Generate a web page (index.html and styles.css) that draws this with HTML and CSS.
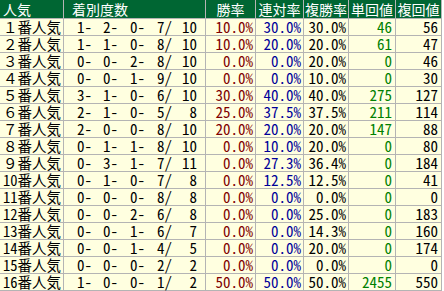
FILE: index.html
```html
<!DOCTYPE html>
<html lang="ja">
<head>
<meta charset="utf-8">
<title>人気別成績</title>
<link rel="stylesheet" href="styles.css">
</head>
<body>
<div class="tbl">
  <div class="h h-name">人気</div><div class="h h-rec">着別度数</div><div class="h">勝率</div><div class="h">連対率</div><div class="h">複勝率</div><div class="h">単回値</div><div class="h">複回値</div>

  <div class="c name">１番人気</div><div class="c rec"><span>1-</span><span>2-</span><span>0-</span><span>7/</span><span>10</span></div><div class="c num win">10.0%</div><div class="c num ren">30.0%</div><div class="c num fuku">30.0%</div><div class="c num tan">46</div><div class="c num fk">56</div>
  <div class="c name">２番人気</div><div class="c rec"><span>1-</span><span>1-</span><span>0-</span><span>8/</span><span>10</span></div><div class="c num win">10.0%</div><div class="c num ren">20.0%</div><div class="c num fuku">20.0%</div><div class="c num tan">61</div><div class="c num fk">47</div>
  <div class="c name">３番人気</div><div class="c rec"><span>0-</span><span>0-</span><span>2-</span><span>8/</span><span>10</span></div><div class="c num win">0.0%</div><div class="c num ren">0.0%</div><div class="c num fuku">20.0%</div><div class="c num tan">0</div><div class="c num fk">46</div>
  <div class="c name">４番人気</div><div class="c rec"><span>0-</span><span>0-</span><span>1-</span><span>9/</span><span>10</span></div><div class="c num win">0.0%</div><div class="c num ren">0.0%</div><div class="c num fuku">10.0%</div><div class="c num tan">0</div><div class="c num fk">30</div>
  <div class="c name">５番人気</div><div class="c rec"><span>3-</span><span>1-</span><span>0-</span><span>6/</span><span>10</span></div><div class="c num win">30.0%</div><div class="c num ren">40.0%</div><div class="c num fuku">40.0%</div><div class="c num tan">275</div><div class="c num fk">127</div>
  <div class="c name">６番人気</div><div class="c rec"><span>2-</span><span>1-</span><span>0-</span><span>5/</span><span>8</span></div><div class="c num win">25.0%</div><div class="c num ren">37.5%</div><div class="c num fuku">37.5%</div><div class="c num tan">211</div><div class="c num fk">114</div>
  <div class="c name">７番人気</div><div class="c rec"><span>2-</span><span>0-</span><span>0-</span><span>8/</span><span>10</span></div><div class="c num win">20.0%</div><div class="c num ren">20.0%</div><div class="c num fuku">20.0%</div><div class="c num tan">147</div><div class="c num fk">88</div>
  <div class="c name">８番人気</div><div class="c rec"><span>0-</span><span>1-</span><span>1-</span><span>8/</span><span>10</span></div><div class="c num win">0.0%</div><div class="c num ren">10.0%</div><div class="c num fuku">20.0%</div><div class="c num tan">0</div><div class="c num fk">80</div>
  <div class="c name">９番人気</div><div class="c rec"><span>0-</span><span>3-</span><span>1-</span><span>7/</span><span>11</span></div><div class="c num win">0.0%</div><div class="c num ren">27.3%</div><div class="c num fuku">36.4%</div><div class="c num tan">0</div><div class="c num fk">184</div>
  <div class="c name">10番人気</div><div class="c rec"><span>0-</span><span>1-</span><span>0-</span><span>7/</span><span>8</span></div><div class="c num win">0.0%</div><div class="c num ren">12.5%</div><div class="c num fuku">12.5%</div><div class="c num tan">0</div><div class="c num fk">41</div>
  <div class="c name">11番人気</div><div class="c rec"><span>0-</span><span>0-</span><span>0-</span><span>8/</span><span>8</span></div><div class="c num win">0.0%</div><div class="c num ren">0.0%</div><div class="c num fuku">0.0%</div><div class="c num tan">0</div><div class="c num fk">0</div>
  <div class="c name">12番人気</div><div class="c rec"><span>0-</span><span>0-</span><span>2-</span><span>6/</span><span>8</span></div><div class="c num win">0.0%</div><div class="c num ren">0.0%</div><div class="c num fuku">25.0%</div><div class="c num tan">0</div><div class="c num fk">183</div>
  <div class="c name">13番人気</div><div class="c rec"><span>0-</span><span>0-</span><span>1-</span><span>6/</span><span>7</span></div><div class="c num win">0.0%</div><div class="c num ren">0.0%</div><div class="c num fuku">14.3%</div><div class="c num tan">0</div><div class="c num fk">160</div>
  <div class="c name">14番人気</div><div class="c rec"><span>0-</span><span>0-</span><span>1-</span><span>4/</span><span>5</span></div><div class="c num win">0.0%</div><div class="c num ren">0.0%</div><div class="c num fuku">20.0%</div><div class="c num tan">0</div><div class="c num fk">174</div>
  <div class="c name">15番人気</div><div class="c rec"><span>0-</span><span>0-</span><span>0-</span><span>2/</span><span>2</span></div><div class="c num win">0.0%</div><div class="c num ren">0.0%</div><div class="c num fuku">0.0%</div><div class="c num tan">0</div><div class="c num fk">0</div>
  <div class="c name">16番人気</div><div class="c rec"><span>1-</span><span>0-</span><span>0-</span><span>1/</span><span>2</span></div><div class="c num win">50.0%</div><div class="c num ren">50.0%</div><div class="c num fuku">50.0%</div><div class="c num tan">2455</div><div class="c num fk">550</div>
</div>
</body>
</html>
```

FILE: styles.css
```css
html, body {
  margin: 0;
  padding: 0;
  background: #ffffff;
}

.tbl {
  display: grid;
  grid-template-columns: 63px 141px 49px 47px 44px 46px 45px;
  grid-template-rows: 18px repeat(16, 16px);
  gap: 1px;
  padding: 0 1px 1px 0;
  width: max-content;
  background: #b4b4b4;
  font-family: "Noto Sans Mono CJK JP", "Noto Sans CJK JP", "DejaVu Sans Mono", monospace;
  font-size: 15px;
  line-height: 16px;
  color: #000000;
}

.h {
  background: #006633;
  color: #ffffff;
  font-family: "Noto Sans CJK JP", sans-serif;
  font-size: 14px;
  line-height: 18px;
  text-align: center;
  white-space: nowrap;
}

.h-name {
  text-align: left;
  padding-left: 3px;
}

.h-rec {
  text-align: left;
  padding-left: 8px;
}

.c {
  background: #ffffe0;
  white-space: nowrap;
}

.name {
  font-family: "Noto Sans Mono CJK JP", "Noto Sans CJK JP", sans-serif;
  font-size: 14.5px;
  padding-left: 3px;
}

.rec {
  display: grid;
  grid-template-columns: 28px 26px 27px 27px 25px;
  text-align: right;
}

.num {
  text-align: right;
  padding-right: 2px;
}

.win { color: #800000; }
.ren { color: #000099; }
.fuku { color: #000000; }
.tan { color: #008000; padding-right: 3px; }
.fk { color: #000000; padding-right: 3px; }
```
